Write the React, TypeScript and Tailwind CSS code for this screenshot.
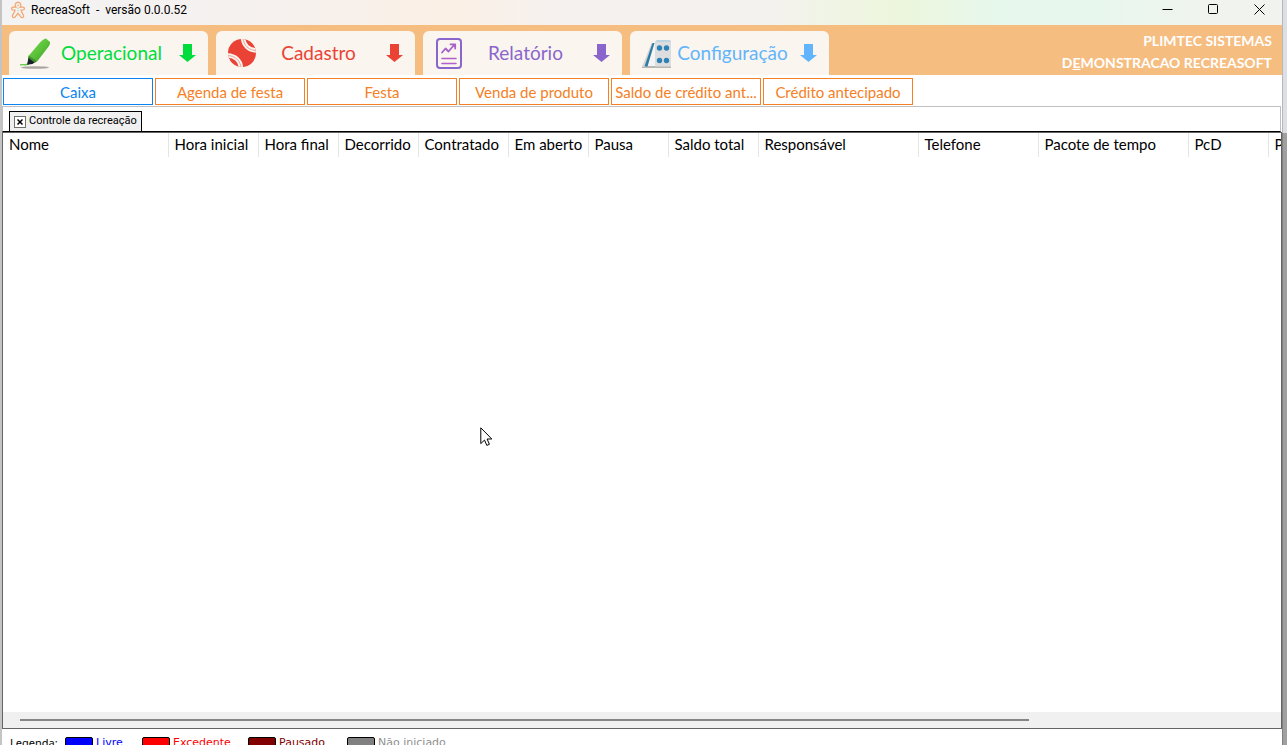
import type { ReactNode } from 'react';
import clsx from 'clsx';

const columns = [
  { label: 'Nome', width: 'w-[165px]' },
  { label: 'Hora inicial', width: 'w-[90px]' },
  { label: 'Hora final', width: 'w-[80px]' },
  { label: 'Decorrido', width: 'w-[80px]' },
  { label: 'Contratado', width: 'w-[90px]' },
  { label: 'Em aberto', width: 'w-[80px]' },
  { label: 'Pausa', width: 'w-[80px]' },
  { label: 'Saldo total', width: 'w-[90px]' },
  { label: 'Responsável', width: 'w-[160px]' },
  { label: 'Telefone', width: 'w-[120px]' },
  { label: 'Pacote de tempo', width: 'w-[150px]' },
  { label: 'PcD', width: 'w-[80px]' },
  { label: 'P', width: 'w-[80px]' },
];

const actions = [
  'Caixa',
  'Agenda de festa',
  'Festa',
  'Venda de produto',
  'Saldo de crédito ant...',
  'Crédito antecipado',
];

const legend = [
  { label: 'Livre', box: 'bg-[#0000ff]', text: 'text-[#0000ff]', item: 'w-[77px]' },
  { label: 'Excedente', box: 'bg-[#ff0000]', text: 'text-[#ff0000]', item: 'w-[106px]' },
  { label: 'Pausado', box: 'bg-[#800000]', text: 'text-[#800000]', item: 'w-[99px]' },
  { label: 'Não iniciado', box: 'bg-[#808080]', text: 'text-[#909090]', item: 'w-[110px]' },
];

function GingerbreadIcon() {
  return (
    <svg width="14" height="18" viewBox="0 0 14 18" fill="none" stroke="#f5a46c" strokeWidth="1.2">
      <path d="M5 6.2C3.6 5 3.8 1.2 7 1.2S10.400 5 9 6.200h3.100c1.700 0 1.700 2.800 0 2.800H10c0 1.800 2 4 2.600 5.600.6 1.700-1.800 2.900-2.800 1.200L7 12.200l-2.800 3.600c-1 1.700-3.400.5-2.800-1.200C2 13 4 10.800 4 9H1.900C.2 9 .2 6.200 1.900 6.200z" />
      <path d="M5.800 3.300h.6M7.700 3.300h.6M6 4.600h2" strokeWidth=".8" />
      <path d="M7 7v.8M7 9.300v.8" stroke="#8bd3a0" />
    </svg>
  );
}

function MarkerIcon() {
  return (
    <svg width="32" height="32" viewBox="0 0 32 32">
      <defs>
        <linearGradient id="marker" x1="0" y1="0" x2="1" y2="1">
          <stop offset="0" stopColor="#7bd655" />
          <stop offset="0.5" stopColor="#5cc43a" />
          <stop offset="1" stopColor="#3c9a26" />
        </linearGradient>
      </defs>
      <ellipse cx="15" cy="30.500" rx="14" ry="1.300" fill="#a9a6a3" />
      <path d="M0 28c3-1.200 5 .6 8.500-1" stroke="#66c94a" strokeWidth="1.400" fill="none" />
      <path d="M26 1.500 30 5c.3 1-.3 3-1 4L17.500 24 8.500 19 20 5.500c1.500-1.800 4-3.800 6-4z" fill="url(#marker)" />
      <path d="M8.500 18.500l9 5.500-3 2-6.500-4z" fill="#3f8f2a" />
      <path d="M8.500 21l6 4.500-2 1.500-5.500.8z" fill="#15202b" />
    </svg>
  );
}

function BallIcon() {
  return (
    <svg width="30" height="30" viewBox="0 0 30 30">
      <defs>
        <clipPath id="ball">
          <circle cx="15" cy="15" r="14" />
        </clipPath>
      </defs>
      <circle cx="15" cy="15" r="14" fill="#ea4335" />
      <g clipPath="url(#ball)" fill="none">
        <path d="M16 0c.5 7 5.500 12.500 14 12.500M0 17.500c8 0 13.500 5 14 12.500" stroke="#faf5ef" strokeWidth="4.400" />
        <path d="M16 0c.5 7 5.500 12.500 14 12.500M0 17.500c8 0 13.500 5 14 12.500" stroke="#e9a49b" strokeWidth="1" />
      </g>
    </svg>
  );
}

function ReportIcon() {
  return (
    <svg width="28" height="32" viewBox="0 0 28 32" fill="none" strokeLinecap="round" strokeLinejoin="round">
      <rect x="3" y="2" width="24" height="29" rx="3" stroke="#8a66cc" strokeWidth="2" />
      <path d="M8 15.500l3.500-4 3 3 6-7M16.500 7.300h4.700v4.200" stroke="#a861c9" strokeWidth="1.800" />
      <path d="M8 21.500h14M8 26.500h14" stroke="#b35fcb" strokeWidth="1.600" />
    </svg>
  );
}

function PanelIcon() {
  return (
    <svg width="32" height="32" viewBox="0 0 32 32">
      <path d="M1 30h29" stroke="#b9b7b4" strokeWidth="2" />
      <path d="M13 6 5 30H1L10.500 6z" fill="#d5d5d5" />
      <path d="M13.500 6 6.500 29.500h-3L11.500 6z" fill="#2d7ba6" />
      <path d="M15 6v23H7.500z" fill="#f4f4f4" />
      <path d="M14 4.500 16 3h13l1 1.500v25H14z" fill="#dcddde" />
      <path d="M16 3h13l1 2H14.500z" fill="#bcd3e0" />
      <g fill="#2c82b5">
        <circle cx="18.500" cy="11" r="2.700" />
        <circle cx="25.500" cy="11" r="2.700" />
        <circle cx="18.500" cy="23.500" r="2.700" />
        <circle cx="25.500" cy="23.500" r="2.700" />
      </g>
    </svg>
  );
}

function ArrowDown() {
  return (
    <svg className="shrink-0" width="17" height="18" viewBox="0 0 17 18" fill="currentColor">
      <path d="M4 0h9v11h4l-8.500 7L0 11h4z" />
    </svg>
  );
}

function MenuTab({ icon, label, color }: { icon: ReactNode; label: string; color: string }) {
  return (
    <button
      className={clsx(
        'flex h-11 w-[199px] shrink-0 items-center rounded-t-md bg-[#faf5ef] pr-3 pl-[11px] text-[19px]',
        color,
      )}
    >
      <span className="flex w-8 shrink-0 justify-start">{icon}</span>
      <span className="flex-1 whitespace-nowrap pr-2 text-center">{label}</span>
      <ArrowDown />
    </button>
  );
}

function TitleBar() {
  return (
    <header className="flex h-[25px] shrink-0 items-start justify-between bg-[linear-gradient(to_right,#f3f3f3,#f5f1ef_20%,#fbf0e6_35%,#f5f1ef_44%,#f4f2ee_60%,#ecf6dc_70%,#e6f7ec_78%,#e8f7ee_86%,#f0f3ee_94%,#f1f3ee)] pl-[9px]">
      <div className="flex items-center gap-1.5">
        <GingerbreadIcon />
        <h1 className="whitespace-pre font-['Roboto',sans-serif] text-[12px] leading-5 text-black">
          RecreaSoft  -  versão 0.0.0.52
        </h1>
      </div>
      <div className="flex text-black">
        <button aria-label="Minimizar" className="flex h-[18px] w-[46px] items-center justify-center">
          <svg width="11" height="11" stroke="currentColor">
            <path d="M.5 5.500h10" />
          </svg>
        </button>
        <button aria-label="Maximizar" className="flex h-[18px] w-[46px] items-center justify-center">
          <svg width="11" height="11" fill="none" stroke="currentColor">
            <rect x=".5" y=".5" width="9" height="9" rx="1" />
          </svg>
        </button>
        <button aria-label="Fechar" className="flex h-[18px] w-[46px] items-center justify-center">
          <svg width="11" height="11" stroke="currentColor">
            <path d="M.5.500l10 10M10.500.500l-10 10" />
          </svg>
        </button>
      </div>
    </header>
  );
}

export default function App() {
  return (
    <div className="flex h-screen overflow-hidden bg-white font-['Lato',sans-serif]">
      <div className="w-0.5 shrink-0 bg-[#c4c4c4]" />

      <div className="flex min-w-0 flex-1 flex-col">
        <TitleBar />

        {/* Main menu */}
        <nav className="flex h-[50px] shrink-0 items-end justify-between bg-[#f6bd80] pr-2.5 pl-[7px]">
          <div className="flex gap-2">
            <MenuTab icon={<MarkerIcon />} label="Operacional" color="text-[#00dc3c]" />
            <MenuTab icon={<BallIcon />} label="Cadastro" color="text-[#ea4335]" />
            <MenuTab icon={<ReportIcon />} label="Relatório" color="text-[#8a66cc]" />
            <MenuTab icon={<PanelIcon />} label="Configuração" color="text-[#62b5fc]" />
          </div>
          <div className="whitespace-nowrap pb-px text-right text-[14px] leading-[22px] font-bold text-white">
            <p>PLIMTEC SISTEMAS</p>
            <p>
              D<u>E</u>MONSTRACAO RECREASOFT
            </p>
          </div>
        </nav>

        {/* Shortcuts of the open menu */}
        <div className="flex shrink-0 gap-0.5 py-[3px] pb-px pl-px">
          {actions.map((label, i) => (
            <button
              key={label}
              className={clsx(
                'h-[27px] w-[150px] border pt-px text-[15px] whitespace-nowrap',
                i === 0 ? 'border-[#0a84f0] text-[#0a84f0]' : 'border-[#f58025] text-[#f58025]',
              )}
            >
              {label}
            </button>
          ))}
        </div>

        {/* Page tabs */}
        <div className="mr-px flex h-[26px] shrink-0 items-end border-x border-t border-b border-x-[#c0c0c0] border-t-[#c0c0c0] border-b-black pl-1.5">
          <div className="flex h-5 items-center gap-[3px] border border-b-0 border-black bg-[#f0f0f0] px-1 font-['Roboto',sans-serif] text-[11px] text-black">
            <button
              aria-label="Fechar aba"
              className="flex size-3 items-center justify-center border border-[#707070] bg-white"
            >
              <svg width="6" height="6" stroke="black" strokeWidth="1.500">
                <path d="M.5.500l5 5M5.500.500l-5 5" />
              </svg>
            </button>
            <span className="whitespace-nowrap">Controle da recreação</span>
          </div>
        </div>

        {/* Grid */}
        <main className="relative flex min-h-0 flex-1 flex-col border border-[#646464]">
          <div className="min-h-0 flex-1 overflow-hidden">
            <table className="w-max table-fixed text-left text-[15px] leading-[22px] text-black">
              <thead>
                <tr>
                  {columns.map((c) => (
                    <th
                      key={c.label}
                      className={clsx(
                        'h-6 whitespace-nowrap border-r border-[#e5e5e5] p-0 pb-0.5 pl-1.5 font-normal',
                        c.width,
                      )}
                    >
                      {c.label}
                    </th>
                  ))}
                </tr>
              </thead>
              <tbody />
            </table>
          </div>
          <div className="flex h-4 shrink-0 items-center bg-[#f0f0f0] pl-[17px]">
            <div className="h-0.5 w-[80%] bg-[#858585]" />
          </div>

          <svg className="absolute top-[294px] left-[477px]" width="13" height="20" viewBox="0 0 13 20">
            <path
              d="M.8.800v15.800l3.700-3.500 2.300 5.300 2.600-1.100L7.100 12h4.700z"
              fill="white"
              stroke="black"
              strokeWidth="1"
            />
          </svg>
        </main>

        <footer className="flex h-4 shrink-0 items-start pt-[7px] pl-2 font-['DejaVu_Sans',sans-serif] text-[11px] leading-[14px]">
          <span className="w-[55px] shrink-0 font-['Noto_Sans',sans-serif] text-black">Legenda:</span>
          {legend.map((l) => (
            <div key={l.label} className={clsx('flex shrink-0 items-start gap-[3px] whitespace-nowrap', l.item, l.text)}>
              <span className={clsx('mt-px h-3 w-7 rounded-xs border border-black', l.box)} />
              {l.label}
            </div>
          ))}
        </footer>
      </div>

      {/* Window edge */}
      <div className="flex w-[5px] shrink-0 flex-col">
        <div className="h-[133px] border-l border-[#b8b8b8] bg-[#dcdfe3]" />
        <div className="flex-1 border-l border-[#808080] bg-[#a0a0a0]" />
      </div>
    </div>
  );
}
